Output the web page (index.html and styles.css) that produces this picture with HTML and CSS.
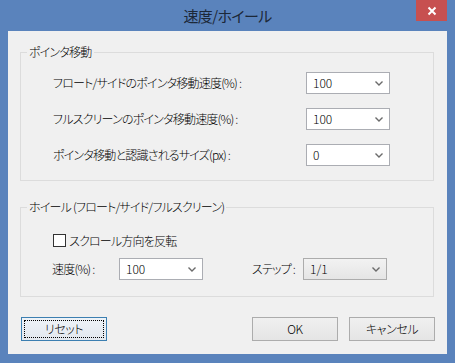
FILE: index.html
```html
<!DOCTYPE html>
<html lang="ja">
<head>
<meta charset="utf-8">
<title>速度/ホイール</title>
<link rel="stylesheet" href="styles.css">
</head>
<body>
<div class="window">
  <div class="titlebar">
    <div class="title">速度/ホイール</div>
    <div class="close"><svg width="10" height="10" viewBox="0 0 10 10"><path d="M1.5 1.5 L8.5 8.5 M8.5 1.5 L1.5 8.5" stroke="#fff" stroke-width="2" fill="none"/></svg></div>
  </div>
  <div class="client">
    <fieldset class="group group-pointer">
      <legend>ポインタ移動</legend>
      <div class="rows">
        <div class="row">
          <span class="label">フロート/サイドのポインタ移動速度(%) :</span>
          <div class="select"><span>100</span><svg width="8" height="5" viewBox="0 0 8 5"><path d="M0.5 0.5 L4 4 L7.5 0.5" stroke="#6b6b6b" stroke-width="1.4" fill="none"/></svg></div>
        </div>
        <div class="row">
          <span class="label">フルスクリーンのポインタ移動速度(%) :</span>
          <div class="select"><span>100</span><svg width="8" height="5" viewBox="0 0 8 5"><path d="M0.5 0.5 L4 4 L7.5 0.5" stroke="#6b6b6b" stroke-width="1.4" fill="none"/></svg></div>
        </div>
        <div class="row">
          <span class="label">ポインタ移動と認識されるサイズ(px) :</span>
          <div class="select"><span>0</span><svg width="8" height="5" viewBox="0 0 8 5"><path d="M0.5 0.5 L4 4 L7.5 0.5" stroke="#6b6b6b" stroke-width="1.4" fill="none"/></svg></div>
        </div>
      </div>
    </fieldset>
    <fieldset class="group group-wheel">
      <legend>ホイール (フロート/サイド/フルスクリーン)</legend>
      <div class="check"><span class="box"></span><span>スクロール方向を反転</span></div>
      <div class="wheel-row">
        <span class="label">速度(%) :</span>
        <div class="select"><span>100</span><svg width="8" height="5" viewBox="0 0 8 5"><path d="M0.5 0.5 L4 4 L7.5 0.5" stroke="#6b6b6b" stroke-width="1.4" fill="none"/></svg></div>
        <span class="label step-label">ステップ :</span>
        <div class="select select-gray"><span>1/1</span><svg width="8" height="5" viewBox="0 0 8 5"><path d="M0.5 0.5 L4 4 L7.5 0.5" stroke="#6b6b6b" stroke-width="1.4" fill="none"/></svg></div>
      </div>
    </fieldset>
    <div class="buttons">
      <div class="btn btn-focus"><span class="focus-ring">リセット</span></div>
      <div class="spacer"></div>
      <div class="btn">OK</div>
      <div class="btn">キャンセル</div>
    </div>
  </div>
</div>
</body>
</html>
```
FILE: styles.css
```css
* { box-sizing: border-box; }
html, body { margin: 0; padding: 0; }
body {
  font-family: "Noto Sans CJK JP", "Noto Sans", sans-serif;
  font-feature-settings: "palt";
  font-weight: 300;
  font-size: 12px;
  letter-spacing: -0.8px;
  color: #000;
  background: #5a83bc;
}
.window {
  width: 455px;
  height: 363px;
  background: #5a83bc;
  display: flex;
  flex-direction: column;
}
.titlebar {
  height: 31px;
  display: grid;
  grid-template-columns: 1fr auto 1fr;
}
.title {
  grid-column: 2;
  align-self: center;
  font-size: 15px;
  font-weight: 400;
  line-height: 20px;
  letter-spacing: -0.6px;
  color: #1c2838;
  padding-top: 1px;
}
.close {
  grid-column: 3;
  justify-self: end;
  align-self: start;
  width: 31px;
  height: 21px;
  margin-right: 8px;
  background: #c75050;
  display: flex;
  align-items: center;
  justify-content: center;
}
.client {
  flex: 1;
  margin: 0 8px 9px 8px;
  background: #f0f0f0;
  padding: 0 13px 13px 12px;
  display: flex;
  flex-direction: column;
}
.group {
  margin: 0;
  border: 1px solid #dcdcdc;
  padding: 0 0 0 32px;
  min-width: 0;
}
.group legend {
  font-size: 12px;
  line-height: 14px;
  height: 14px;
  padding: 0 2px;
  margin-left: -26px;
}
.group-pointer {
  margin-top: 14px;
  padding-top: 13px;
  padding-bottom: 14px;
}
.rows {
  display: flex;
  flex-direction: column;
  gap: 14px;
}
.row {
  display: grid;
  grid-template-columns: 253px 84px;
  align-items: center;
  height: 22px;
}
.label { white-space: nowrap; line-height: 14px; }
.select {
  width: 84px;
  height: 22px;
  border: 1px solid #abadb3;
  background: #fff;
  display: flex;
  align-items: center;
  justify-content: space-between;
  padding: 0 6px 0 6px;
  line-height: 14px;
  letter-spacing: 0;
}
.select span { padding-bottom: 1px; }
.select svg { flex: none; margin-top: 1px; }
.select-gray {
  border-color: #acacac;
  background: linear-gradient(#f2f2f2, #e5e5e5);
}
.group-wheel {
  margin-top: 19px;
  padding-top: 20px;
  padding-bottom: 16px;
}
.check {
  height: 13px;
  display: flex;
  align-items: center;
  margin-bottom: 11px;
  line-height: 14px;
}
.box {
  width: 13px;
  height: 13px;
  border: 1px solid #333;
  background: #fff;
  margin-right: 3px;
  flex: none;
}
.wheel-row {
  display: grid;
  grid-template-columns: 67px 84px 100px 84px;
  align-items: center;
  height: 22px;
  margin-left: -1px;
}
.step-label { justify-self: end; padding-right: 8px; }
.buttons {
  margin-top: 20px;
  display: flex;
  gap: 11px;
  padding-left: 1px;
  margin-right: -1px;
}
.spacer { flex: 1; }
.btn {
  width: 86px;
  height: 24px;
  border: 1px solid #acacac;
  background: linear-gradient(#f0f0f0, #e5e5e5);
  display: flex;
  align-items: center;
  justify-content: center;
  line-height: 14px;
  letter-spacing: -0.4px;
}
.btn-focus {
  border-color: #3c7fb1;
  padding: 2px;
  background: linear-gradient(#eef3f8, #e3e8ee);
}
.focus-ring {
  width: 100%;
  height: 100%;
  border: 1px dotted #000;
  display: flex;
  align-items: center;
  justify-content: center;
}
```
